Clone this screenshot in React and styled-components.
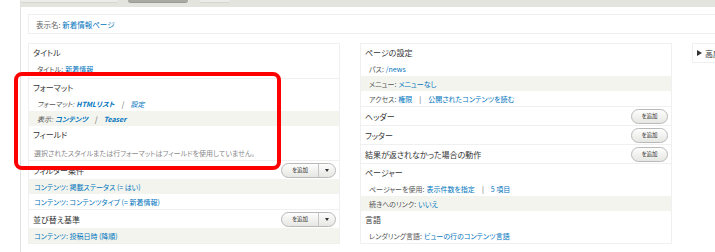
import React from "react";
import styled, { createGlobalStyle } from "styled-components";

const GlobalStyle = createGlobalStyle`
  body {
    margin: 0;
    background: #fff;
    font-family: "Noto Sans CJK JP", "Noto Sans", sans-serif;
    color: #333;
    overflow: hidden;
  }
`;

const Page = styled.div`
  position: relative;
  width: 715px;
  height: 252px;
  overflow: hidden;
  display: flex;
  flex-direction: column;
`;

const TabStrip = styled.div`
  margin-left: 20px;
  height: 7px;
  flex-shrink: 0;
  background: #e4e4df;
  display: flex;
  align-items: flex-start;
`;

const Tab = styled.div`
  width: ${(p) => p.$w}px;
  margin-left: ${(p) => p.$ml}px;
  height: 2px;
  border-radius: 0 0 3px 3px;
  background: ${(p) => (p.$active ? "#a9aaa4" : "#ecece8")};
  border-bottom: 1px solid ${(p) => (p.$active ? "#9a9b96" : "#d6d6d0")};
`;

const Main = styled.div`
  flex: 1;
  margin-left: 20px;
  border-left: 1px solid #e2e2e2;
  padding: 7px 0 0 7px;
  display: flex;
  flex-direction: column;
`;

const DisplayBar = styled.div`
  height: 18px;
  width: 720px;
  flex-shrink: 0;
  border: 1px solid #efefef;
  display: flex;
  align-items: center;
  padding-left: 7px;
  font-size: 7.5px;
  color: #666;
  font-feature-settings: "palt";
`;

const Columns = styled.div`
  display: flex;
  gap: 20px;
  margin-top: 9px;
  align-items: flex-start;
`;

const Column = styled.div`
  width: 310px;
  flex-shrink: 0;
  border: 1px solid #f0f0f0;
  display: flex;
  flex-direction: column;
  font-feature-settings: "palt";
`;

const Section = styled.div`
  display: flex;
  flex-direction: column;
  padding-bottom: ${(p) => (p.$pad ? 2 : 0)}px;
  border-top: ${(p) => (p.$first ? "none" : "1px solid #f0f0f0")};
`;

const Header = styled.div`
  height: ${(p) => (p.$tall ? 18 : 17)}px;
  display: flex;
  align-items: center;
  justify-content: space-between;
  padding: 0 3px 0 4px;
  font-size: 8px;
  color: #333;
`;

const Row = styled.div`
  height: ${(p) => (p.$h ? p.$h : 15)}px;
  box-sizing: border-box;
  display: flex;
  align-items: ${(p) => (p.$h ? "flex-end" : "center")};
  padding: 0 0 ${(p) => (p.$h ? 2 : 0)}px ${(p) => (p.$indent ? 8 : 5)}px;
  background: ${(p) => (p.$shade ? "#f3f4ee" : "transparent")};
  font-size: 7px;
  font-style: ${(p) => (p.$italic ? "italic" : "normal")};
  color: ${(p) => (p.$muted ? "#8a8a8a" : "#555")};
  white-space: nowrap;
  gap: 2px;
`;

const Link = styled.span`
  color: #0074bd;
  font-weight: ${(p) => (p.$bold ? 700 : 400)};
`;

const Sep = styled.span`
  color: #555;
  margin: 0 5px;
`;

const Btn = styled.div`
  height: 13px;
  display: flex;
  align-items: stretch;
  border: 1px solid #b9b9b9;
  border-radius: 8px;
  background: linear-gradient(#fdfdfd, #e6e6e2);
  font-size: 5.5px;
  color: #333;
  overflow: hidden;
`;

const BtnLabel = styled.span`
  width: ${(p) => p.$w}px;
  display: flex;
  align-items: center;
  justify-content: center;
`;

const BtnArrow = styled.span`
  width: 16px;
  border-left: 1px solid #c6c6c6;
  display: flex;
  align-items: center;
  justify-content: center;
  &::after {
    content: "";
    border-left: 2.5px solid transparent;
    border-right: 2.5px solid transparent;
    border-top: 3px solid #333;
  }
`;

const Advanced = styled.div`
  width: 60px;
  flex-shrink: 0;
  height: 18px;
  border: 1px solid #f0f0f0;
  display: flex;
  align-items: center;
  padding-left: 4px;
  font-size: 8px;
  color: #333;
  white-space: nowrap;
  gap: 3px;
`;

const Triangle = styled.span`
  border-top: 3px solid transparent;
  border-bottom: 3px solid transparent;
  border-left: 5px solid #333;
`;

const Highlight = styled.div`
  position: absolute;
  left: 14px;
  top: 72px;
  width: 259px;
  height: 90px;
  border: 4px solid #f00;
  border-radius: 8px;
  pointer-events: none;
`;

const AddButton = ({ split }) => (
  <Btn>
    <BtnLabel $w={split ? 36 : 35}>を追加</BtnLabel>
    {split && <BtnArrow />}
  </Btn>
);

export default function App() {
  return (
    <Page>
      <GlobalStyle />
      <TabStrip>
        <Tab $w={98} $ml={0} />
        <Tab $w={60} $ml={10} $active />
        <Tab $w={31} $ml={11} />
      </TabStrip>
      <Main>
        <DisplayBar>
          表示名:&nbsp;<Link>新着情報ページ</Link>
        </DisplayBar>
        <Columns>
          <Column>
            <Section $first $pad>
              <Header>タイトル</Header>
              <Row $indent>
                タイトル: <Link>新着情報</Link>
              </Row>
            </Section>
            <Section>
              <Header>フォーマット</Header>
              <Row $indent $italic>
                フォーマット: <Link $bold>HTMLリスト</Link>
                <Sep>|</Sep>
                <Link>設定</Link>
              </Row>
              <Row $indent $italic $shade>
                表示: <Link $bold>コンテンツ</Link>
                <Sep>|</Sep>
                <Link $bold>Teaser</Link>
              </Row>
              <Header>フィールド</Header>
              <Row $muted $h={17}>
                選択されたスタイルまたは行フォーマットはフィールドを使用していません。
              </Row>
            </Section>
            <Section>
              <Header $tall>
                フィルター条件
                <AddButton split />
              </Header>
              <Row $shade>
                <Link>コンテンツ: 掲載ステータス (= はい)</Link>
              </Row>
              <Row>
                <Link>コンテンツ: コンテンツタイプ (= 新着情報)</Link>
              </Row>
            </Section>
            <Section>
              <Header $tall>
                並び替え基準
                <AddButton split />
              </Header>
              <Row $shade>
                <Link>コンテンツ: 投稿日時 (降順)</Link>
              </Row>
            </Section>
          </Column>

          <Column>
            <Section $first>
              <Header>ページの設定</Header>
              <Row $indent>
                パス: <Link>/news</Link>
              </Row>
              <Row $indent $shade>
                メニュー: <Link>メニューなし</Link>
              </Row>
              <Row $indent>
                アクセス: <Link>権限</Link>
                <Sep>|</Sep>
                <Link>公開されたコンテンツを読む</Link>
              </Row>
            </Section>
            <Section>
              <Header $tall>
                ヘッダー
                <AddButton />
              </Header>
            </Section>
            <Section>
              <Header $tall>
                フッター
                <AddButton />
              </Header>
            </Section>
            <Section>
              <Header $tall>
                結果が返されなかった場合の動作
                <AddButton />
              </Header>
            </Section>
            <Section>
              <Header>ページャー</Header>
              <Row $indent>
                ページャーを使用: <Link>表示件数を指定</Link>
                <Sep>|</Sep>
                <Link>5 項目</Link>
              </Row>
              <Row $indent $shade>
                続きへのリンク: <Link>いいえ</Link>
              </Row>
              <Header>言語</Header>
              <Row $indent>
                レンダリング言語: <Link>ビューの行のコンテンツ言語</Link>
              </Row>
            </Section>
          </Column>

          <Advanced>
            <Triangle />
            高度な設定
          </Advanced>
        </Columns>
      </Main>
      <Highlight />
    </Page>
  );
}
